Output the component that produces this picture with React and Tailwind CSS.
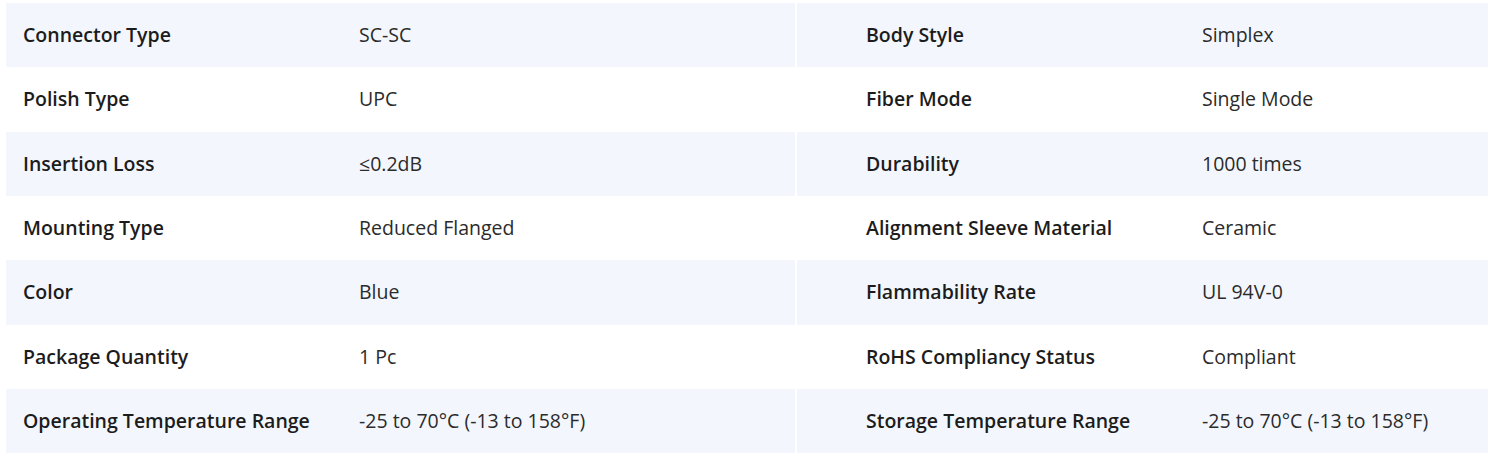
import React from "react";

const left = [
  ["Connector Type", "SC-SC"],
  ["Polish Type", "UPC"],
  ["Insertion Loss", "≤0.2dB"],
  ["Mounting Type", "Reduced Flanged"],
  ["Color", "Blue"],
  ["Package Quantity", "1 Pc"],
  ["Operating Temperature Range", "-25 to 70°C (-13 to 158°F)"],
];

const right = [
  ["Body Style", "Simplex"],
  ["Fiber Mode", "Single Mode"],
  ["Durability", "1000 times"],
  ["Alignment Sleeve Material", "Ceramic"],
  ["Flammability Rate", "UL 94V-0"],
  ["RoHS Compliancy Status", "Compliant"],
  ["Storage Temperature Range", "-25 to 70°C (-13 to 158°F)"],
];

function SpecTable({ rows, lead }) {
  return (
    <div className="flex flex-col">
      {rows.map(([label, value], index) => (
        <div
          key={label}
          className={`flex items-center h-[64.33px] ${lead} ${index % 2 === 0 ? "bg-[#f3f7fd]" : "bg-white"}`}
        >
          <div className="w-[336px] shrink-0 pl-[17px] font-semibold text-[#1c1c1c] whitespace-nowrap">{label}</div>
          <div className="pl-[17px] text-[#2b2b2b] whitespace-nowrap">{value}</div>
        </div>
      ))}
    </div>
  );
}

export default function App() {
  return (
    <div
      className="w-[1488px] h-[459px] bg-white pt-[3px] pl-[6px] flex gap-[2px] text-[19.5px] leading-7"
      style={{ fontFamily: '"Open Sans", "Noto Sans", sans-serif' }}
    >
      <div className="w-[789px]">
        <SpecTable rows={left} lead="" />
      </div>
      <div className="flex-1">
        <SpecTable rows={right} lead="pl-[52px]" />
      </div>
    </div>
  );
}
